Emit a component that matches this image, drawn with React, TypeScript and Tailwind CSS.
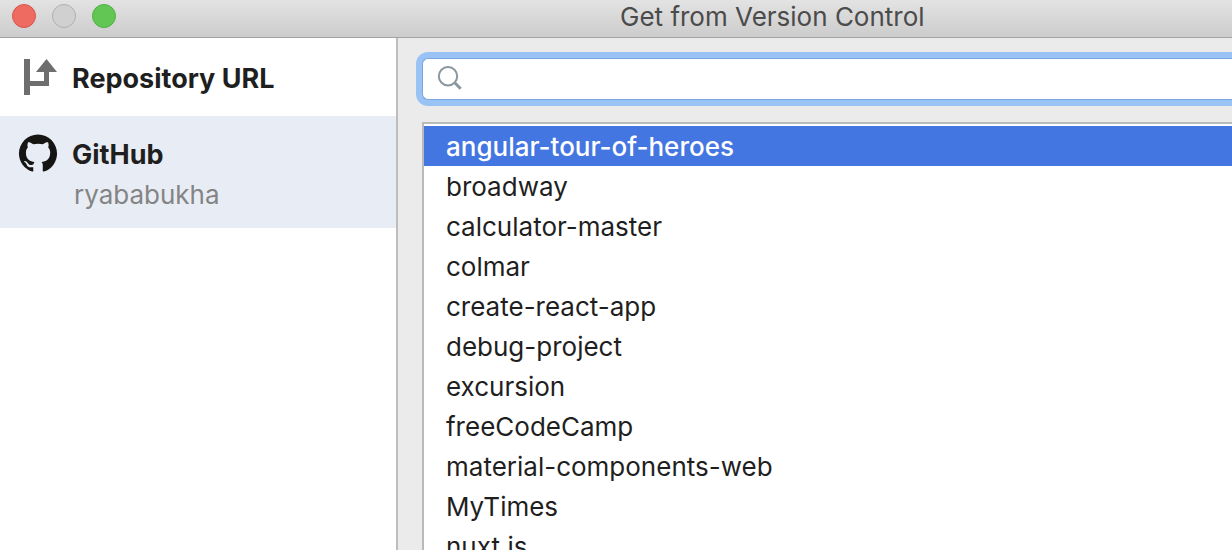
import { useState } from "react";

const repositories = [
  "angular-tour-of-heroes",
  "broadway",
  "calculator-master",
  "colmar",
  "create-react-app",
  "debug-project",
  "excursion",
  "freeCodeCamp",
  "material-components-web",
  "MyTimes",
  "nuxt.js",
];

function RepositoryIcon() {
  return (
    <svg className="size-10 shrink-0" viewBox="0 0 40 40" fill="#6e6e6e" aria-hidden="true">
      <path d="M6 1h6v36H6z" />
      <path d="M12 23h14v-9h-8L28.500 1 39 14h-8v14H12z" />
    </svg>
  );
}

function GitHubIcon() {
  return (
    <svg className="size-10 shrink-0" viewBox="-0.400 -0.200 16.800 16.800" fill="#161514" aria-hidden="true">
      <path d="M8 0C3.580 0 0 3.580 0 8c0 3.540 2.290 6.530 5.470 7.590.4.070.55-.17.55-.38 0-.19-.01-.82-.01-1.490-2.010.37-2.530-.49-2.690-.94-.09-.23-.48-.94-.82-1.130-.28-.15-.68-.52-.01-.53.63-.01 1.080.58 1.230.82.72 1.210 1.870.87 2.330.66.07-.52.28-.87.51-1.070-1.780-.2-3.640-.89-3.640-3.950 0-.87.31-1.590.82-2.150-.08-.2-.36-1.020.08-2.120 0 0 .67-.21 2.200.82.64-.18 1.320-.27 2-.27s1.360.09 2 .27c1.530-1.040 2.200-.82 2.200-.82.44 1.100.16 1.920.08 2.120.51.56.82 1.270.82 2.150 0 3.070-1.870 3.750-3.650 3.950.29.25.54.73.54 1.480 0 1.070-.01 1.930-.01 2.200 0 .21.15.46.55.38A8.013 8.013 0 0 0 16 8c0-4.420-3.580-8-8-8z" />
    </svg>
  );
}

function TitleBar() {
  return (
    <header className="flex h-[38px] shrink-0 items-start border-b border-[#a4a4a4] bg-linear-to-b from-[#e3e3e3] to-[#cccccc] pl-3">
      <div className="flex w-[608px] shrink-0 gap-4 pt-1">
        <button aria-label="Close" className="size-6 rounded-full border border-[#d9544c] bg-[#ed6b60]" />
        <button aria-label="Minimize" className="size-6 rounded-full border border-[#b0b0b0] bg-[#d0d0d0]" />
        <button aria-label="Zoom" className="size-6 rounded-full border border-[#4fb043] bg-[#62c655]" />
      </div>
      <h1 className="whitespace-nowrap text-[26px] leading-[34px] text-[#4b4b4b]">Get from Version Control</h1>
    </header>
  );
}

function Sidebar() {
  return (
    <nav aria-label="Sources" className="flex w-[398px] shrink-0 flex-col border-r-2 border-[#bdbdbd] bg-white">
      <button className="flex h-[78px] items-start gap-[14px] pl-[18px] pt-5 text-left">
        <RepositoryIcon />
        <span className="text-[27px] font-bold leading-[42px]">Repository URL</span>
      </button>
      <button className="flex h-28 items-start gap-[14px] bg-[#e8edf5] pl-[18px] pt-[18px] text-left">
        <GitHubIcon />
        <span className="flex flex-col">
          <span className="text-[27px] font-bold leading-[42px]">GitHub</span>
          <span className="pl-[2px] text-[26px] leading-[38px] text-[#848484]">ryababukha</span>
        </span>
      </button>
    </nav>
  );
}

export default function App() {
  const [selected, setSelected] = useState(repositories[0]);
  return (
    <div className="flex h-screen flex-col overflow-hidden bg-[#ebebeb] font-['Inter',sans-serif] text-[#1f1f1f]">
      <TitleBar />
      <div className="flex min-h-0 flex-1">
        <Sidebar />
        <main className="flex min-w-0 flex-1 flex-col pl-[18px] pt-[14px]">
          <label className="flex h-[54px] shrink-0 rounded-l-xl bg-[#99c3f5] py-[6px] pl-[6px]">
            <span className="flex flex-1 items-center rounded-l-md border-y border-l border-[#7ba7df] bg-white pl-[14px]">
              <svg className="size-7 shrink-0" viewBox="0 0 28 28" fill="none" stroke="#8b979f" aria-hidden="true">
                <circle cx="11" cy="11.300" r="9.200" strokeWidth="2" />
                <path d="M17.500 17.500l6.200 6.200" strokeWidth="3" />
              </svg>
              <input type="text" aria-label="Search repositories" className="min-w-0 flex-1 px-2 text-[26px] outline-none" />
            </span>
          </label>
          <ul className="ml-[6px] mt-4 min-h-0 flex-1 overflow-hidden border-l-2 border-t-2 border-[#bababa] bg-white pt-[2px]">
            {repositories.map((name) => (
              <li key={name}>
                <button
                  onClick={() => setSelected(name)}
                  className={
                    name === selected
                      ? "block h-10 w-full bg-[#4476e1] pl-[22px] text-left text-[26px] font-medium leading-[42px] text-white"
                      : "block h-10 w-full pl-[22px] text-left text-[26px] leading-[42px]"
                  }
                >
                  {name}
                </button>
              </li>
            ))}
          </ul>
        </main>
      </div>
    </div>
  );
}
